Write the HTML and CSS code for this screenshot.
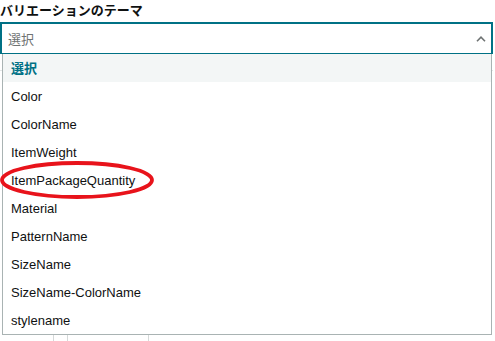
FILE: index.html
```html
<!DOCTYPE html>
<html lang="ja">
<head>
  <meta charset="UTF-8">
  <title>バリエーションのテーマ</title>
  <meta name="viewport" content="width=device-width, initial-scale=1.0">
  <link rel="stylesheet" href="styles.css">
</head>
<body>
  <div class="field">
    <label class="field-label">バリエーションのテーマ</label>
    <div class="select">
      <span class="placeholder">選択</span>
      <svg class="chevron" width="10" height="6" viewBox="0 0 10 6">
        <path d="M1 5.2 L5 1.2 L9 5.2" fill="none" stroke="#6f7373" stroke-width="1.6"/>
      </svg>
    </div>

    <div class="under">
      <div class="under-row"></div>
      <div class="under-cells">
        <div class="cell c1"></div>
        <div class="cell c2"></div>
        <div class="cell c3"></div>
      </div>
    </div>

    <ul class="menu">
      <li class="option selected">選択</li>
      <li class="option">Color</li>
      <li class="option">ColorName</li>
      <li class="option">ItemWeight</li>
      <li class="option">ItemPackageQuantity</li>
      <li class="option">Material</li>
      <li class="option">PatternName</li>
      <li class="option">SizeName</li>
      <li class="option">SizeName-ColorName</li>
      <li class="option">stylename</li>
    </ul>

    <svg class="mark" width="156" height="40" viewBox="0 0 156 40">
      <ellipse cx="77" cy="19" rx="75" ry="17" fill="none" stroke="#e8131b" stroke-width="3.8"/>
    </svg>
  </div>
</body>
</html>
```

FILE: styles.css
```css
body {
  margin: 0;
  background: #fff;
  font-family: 'Liberation Sans', Arial, 'Noto Sans CJK JP', sans-serif;
  color: #0f1111;
}
.field {
  position: relative;
  width: 493px;
}
.field-label {
  display: block;
  height: 20px;
  line-height: 22px;
  font-size: 13px;
  font-weight: bold;
  margin-bottom: 2px;
}
.select {
  box-sizing: border-box;
  height: 32px;
  border: 2px solid #007185;
  border-bottom-width: 1px;
  padding: 0 5px 0 6px;
  display: flex;
  align-items: center;
  justify-content: space-between;
}
.placeholder {
  font-size: 13px;
  color: #6f7373;
}
.chevron {
  display: block;
  margin-top: 1px;
}
.under {
  height: 287px;
}
.under-row {
  margin-top: 16px;
  height: 1px;
  background: #e3e6e6;
}
.under-cells {
  display: flex;
  margin-top: 263px;
  height: 8px;
}
.cell {
  border-left: 1px solid #d5d9d9;
}
.c1 { margin-left: 53px; }
.c2 { margin-left: 13px; }
.c3 { margin-left: 80px; }
.menu {
  position: absolute;
  top: 54px;
  left: 2px;
  width: 488px;
  margin: 0;
  padding: 0;
  list-style: none;
  background: #fff;
  border: 1px solid #a9b3b3;
  border-top: none;
}
.option {
  height: 28px;
  line-height: 29px;
  padding-left: 8px;
  font-size: 13px;
  color: #0f1111;
}
.option.selected {
  background: #f3f6f6;
  color: #007185;
  font-weight: bold;
}
.mark {
  position: absolute;
  top: 161px;
  left: 0;
}
```
